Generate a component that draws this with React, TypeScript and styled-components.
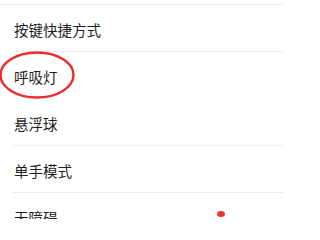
import React from "react";
import styled, { createGlobalStyle } from "styled-components";

const Global = createGlobalStyle`
  html, body { margin: 0; padding: 0; background: #ffffff; }
  body { font-family: "Noto Sans CJK SC", "Noto Sans", sans-serif; overflow: hidden; }
`;

const Page = styled.div`
  width: 283px;
  height: 219px;
  overflow: hidden;
  background: #ffffff;
  padding-top: 4px;
  box-sizing: border-box;
  position: relative;
`;

const List = styled.div`
  border-top: 1px solid #ececec;
  display: flex;
  flex-direction: column;
`;

const Row = styled.div<{ $divider: boolean }>`
  position: relative;
  height: 47px;
  flex-shrink: 0;
  display: flex;
  align-items: center;
  padding-left: 14px;
  padding-top: 2px;
  box-sizing: border-box;
  font-size: 14.5px;
  color: #1f1f1f;
  &::after {
    content: "";
    display: ${(p) => (p.$divider ? "block" : "none")};
    position: absolute;
    left: 13px;
    right: 0;
    bottom: 0;
    height: 1px;
    background: #ececec;
  }
`;

const Circle = styled.svg`
  position: absolute;
  left: -1px;
  top: 51px;
  width: 78px;
  height: 48px;
  overflow: visible;
`;

const Dot = styled.div`
  position: absolute;
  left: 217px;
  top: 211px;
  width: 8px;
  height: 6px;
  border-radius: 50%;
  background: #f23030;
`;

const items = [
  { label: "按键快捷方式", divider: true },
  { label: "呼吸灯", divider: false },
  { label: "悬浮球", divider: true },
  { label: "单手模式", divider: true },
  { label: "无障碍", divider: true },
];

export default function App() {
  return (
    <>
      <Global />
      <Page>
        <List>
          {items.map((it) => (
            <Row key={it.label} $divider={it.divider}>
              {it.label}
            </Row>
          ))}
        </List>
        <Circle viewBox="0 0 78 48">
          <ellipse cx="38" cy="24" rx="36.5" ry="22.5" fill="none" stroke="#ee2b2b" strokeWidth="2.4" />
        </Circle>
        <Dot />
      </Page>
    </>
  );
}
